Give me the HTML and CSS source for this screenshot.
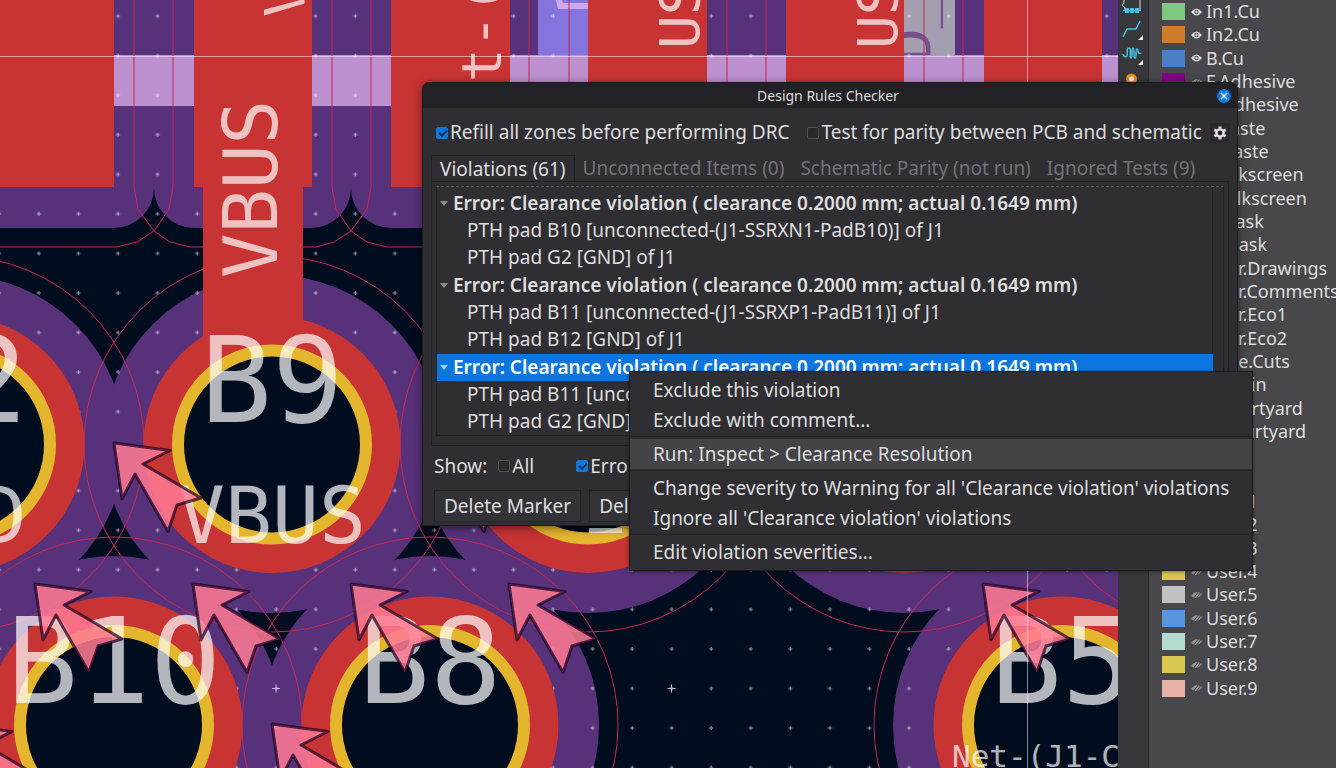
FILE: index.html
```
<!DOCTYPE html>
<html lang="en">
<head>
  <meta charset="UTF-8">
  <meta name="viewport" content="width=device-width, initial-scale=1.0">
  <title>PCB Editor</title>
  <link rel="stylesheet" href="styles.css">
</head>
<body>
  <main class="editor">
    <svg class="board" width="1118" height="768" viewBox="0 0 1118 768" role="img" aria-label="Board">
      <defs>
        <pattern id="dots" x="256.2" y="668.7" width="39.55" height="39.55" patternUnits="userSpaceOnUse">
          <path d="M18 19.8h4M20 17.8v4" stroke="#fff" stroke-opacity=".6"/>
        </pattern>
        <g id="pad">
          <circle r="128.5" fill="#c83434"/>
          <circle r="94" fill="#000d1e" stroke="#e3b62e" stroke-width="12"/>
        </g>
        <path id="arrow" d="M0 0L56 7.500 29 21 87 55 63 62 54 88.500 21 31 8 56Z"/>
      </defs>

      <!-- zone clearance -->
      <g fill="#57327a">
        <rect x="-60" y="-60" width="214" height="288" rx="40"/>
        <rect x="154" y="-60" width="197" height="288" rx="40"/>
        <rect x="351" y="-60" width="198" height="288" rx="40"/>
        <rect x="549" y="-60" width="600" height="288" rx="40"/>
        <path d="M110 0h90v187h-90zM308 0h90v187h-90z"/>
        <circle cx="-44" cy="444" r="169"/>
        <circle cx="272" cy="444" r="169"/>
        <circle cx="588" cy="444" r="169"/>
        <circle cx="904" cy="444" r="169"/>
        <circle cx="1220" cy="444" r="169"/>
        <circle cx="-202" cy="725" r="169"/>
        <circle cx="114" cy="725" r="169"/>
        <circle cx="430" cy="725" r="169"/>
        <circle cx="1062" cy="725" r="169"/>
      </g>
      <rect x="538" y="0" width="50" height="55" fill="#8574dc"/>
      <path d="M556 0h6l1 3h25v6h-30z" fill="#cda6f0"/>
      <rect x="904" y="0" width="51" height="55" fill="#a39eb0"/>
      <text class="ref-name" transform="translate(930 62) rotate(-90)">D_</text>
      <g fill="#bd90cf">
        <path d="M114 55h80v51h-80zM312 55h79v51h-79zM510 55h78v51h-78zM707 55h79v51h-79zM904 55h80v51h-80zM1102 55h16v51h-16z"/>
      </g>
      <rect width="1118" height="768" fill="url(#dots)"/>
      <path d="M272 688.500h8M276 684.500v8M667.500 688.500h8M671.500 684.500v8" stroke="#d0b0dc"/>

      <!-- clearance outlines -->
      <g class="outline">
        <path d="M134 0v187l4 22 16 22 16 11 20 5h126l18-5 17-11 16-22 4-22V0"/>
        <path d="M173 0v187l-4 22-15 22-17 11-21 5H0"/>
        <path d="M332 0v187l4 22 15 22 16 11 20 5h40M529 0v90M569 0v90M727 0v90M766 0v90M924 0v90M963 0v90"/>
        <circle cx="-44" cy="444" r="188"/>
        <circle cx="272" cy="444" r="188"/>
        <circle cx="588" cy="444" r="188"/>
        <circle cx="904" cy="444" r="188"/>
        <circle cx="1220" cy="444" r="188"/>
        <circle cx="-202" cy="725" r="188"/>
        <circle cx="114" cy="725" r="188"/>
        <circle cx="430" cy="725" r="188"/>
        <circle cx="1062" cy="725" r="188"/>
      </g>

      <!-- copper -->
      <g fill="#c83434">
        <path d="M0 0h114v187H0zM194 0h118v187h-9v150H203V187h-9zM391 0h119v187H391zM588 0h119v187H588zM786 0h118v187H786zM984 0h118v187H984z"/>
      </g>
      <use href="#pad" x="-44" y="444.500"/>
      <use href="#pad" x="272" y="444.500"/>
      <use href="#pad" x="588" y="444.500"/>
      <use href="#pad" x="904" y="444.500"/>
      <use href="#pad" x="114" y="725"/>
      <use href="#pad" x="430" y="725"/>
      <use href="#pad" x="1062" y="725"/>

      <g class="pad-name">
        <text x="-44" y="422">G2</text>
        <text x="272" y="422">B9</text>
        <text x="114" y="703">B10</text>
        <text x="430" y="703">B8</text>
        <text x="1062" y="703">B5</text>
      </g>
      <g class="net-name">
        <text x="-44" y="543">GND</text>
        <text x="272" y="543">VBUS</text>
        <text class="track-name" transform="translate(277 189) rotate(-90)">VBUS</text>
      </g>
      <g class="net-name-small">
        <text transform="translate(304 17) rotate(-90)">VBUS</text>
        <text transform="translate(501 82) rotate(-90)">t-(J1</text>
        <text transform="translate(699 49) rotate(-90)">USB</text>
        <text transform="translate(897 49) rotate(-90)">USB</text>
      </g>
      <text class="net-name-tiny" x="952" y="767">Net-(J1-C</text>
      <path d="M589 528h33v5h-33z" fill="#fff" fill-opacity=".7"/>

      <g class="marker">
        <use href="#arrow" x="114" y="443"/>
        <use href="#arrow" x="430" y="443"/>
        <use href="#arrow" x="35" y="584"/>
        <use href="#arrow" x="193" y="584"/>
        <use href="#arrow" x="351" y="584"/>
        <use href="#arrow" x="509" y="584"/>
        <use href="#arrow" x="983" y="584"/>
        <use href="#arrow" x="272" y="724"/>
        <use href="#arrow" x="-44" y="724"/>
      </g>
      <path d="M0 56.500h1118M1027.500 0v768" stroke="#fff" stroke-opacity=".5"/>
    </svg>

    <div class="toolbar">
      <svg width="31" height="90" viewBox="0 0 31 90" fill="none" aria-hidden="true">
        <path d="M6 0v3l-2 2 3 3v2M22 0v10" stroke="#ddd"/>
        <path d="M5 10.500h18" stroke="#45c4e0"/>
        <path d="M7 8h4v5H7zM12 8h4v5h-4zM17 8h4v5h-4z" fill="#45c4e0"/>
        <path d="M5 37l4-8h9l4-8" stroke="#45c4e0" stroke-width="1.500"/>
        <path d="M25 35v5h-5zM25 60v5h-5z" fill="#eee"/>
        <path d="M5 54c0 2 3 4 4 2s-1-8 2-8 0 10 2 10 0-10 2-10 0 10 2 10 0-9 2-9 0 6 4 4" stroke="#45c4e0" stroke-width="1.500"/>
        <circle cx="13.500" cy="79" r="4" fill="#fff3d5" stroke="#ea8c1c" stroke-width="3"/>
      </svg>
    </div>

    <aside class="layers">
      <ul class="layer-list" id="layerList"></ul>
    </aside>
  </main>

  <section class="dialog" role="dialog" aria-labelledby="dialogTitle">
    <header class="titlebar">
      <h1 id="dialogTitle">Design Rules Checker</h1>
      <button class="close" aria-label="Close">
        <svg width="14" height="14" viewBox="0 0 14 14"><path d="M4 4l6 6M10 4l-6 6" stroke="#fff" stroke-width="1.500"/></svg>
      </button>
    </header>
    <div class="options">
      <label><input type="checkbox" checked>Refill all zones before performing DRC</label>
      <label><input type="checkbox">Test for parity between PCB and schematic</label>
      <button class="settings" aria-label="Settings">
        <svg width="14" height="14" viewBox="0 0 14 14" fill="none" stroke="#e8dde8"><circle cx="7" cy="7" r="3.600" stroke-width="2.400"/><path d="M7 .5v2M7 11.500v2M1.400 3.700l1.700 1M10.900 9.300l1.700 1M1.400 10.300l1.700-1M10.900 4.700l1.700-1" stroke-width="3"/></svg>
      </button>
    </div>
    <nav class="tabs">
      <button class="tab active">Violations (61)</button>
      <button class="tab">Unconnected Items (0)</button>
      <button class="tab">Schematic Parity (not run)</button>
      <button class="tab">Ignored Tests (9)</button>
    </nav>
    <div class="notebook">
      <div class="tree">
        <ul class="group clipped"><li>PTH pad G2 [GND] of J1</li></ul>
        <ul class="group">
          <li class="error">Error: Clearance violation ( clearance 0.2000 mm; actual 0.1649 mm)</li>
          <li>PTH pad B10 [unconnected-(J1-SSRXN1-PadB10)] of J1</li>
          <li>PTH pad G2 [GND] of J1</li>
        </ul>
        <ul class="group">
          <li class="error">Error: Clearance violation ( clearance 0.2000 mm; actual 0.1649 mm)</li>
          <li>PTH pad B11 [unconnected-(J1-SSRXP1-PadB11)] of J1</li>
          <li>PTH pad B12 [GND] of J1</li>
        </ul>
        <ul class="group">
          <li class="error selected">Error: Clearance violation ( clearance 0.2000 mm; actual 0.1649 mm)</li>
          <li>PTH pad B11 [unconnected-(J1-SSRXP1-PadB11)] of J1</li>
          <li>PTH pad G2 [GND] of J1</li>
        </ul>
      </div>
    </div>
    <div class="show">
      <span>Show:</span>
      <label class="show-all"><input type="checkbox">All</label>
      <label><input type="checkbox" checked>Errors</label>
    </div>
    <footer class="actions">
      <button>Delete Marker</button>
      <button>Delete All Markers</button>
    </footer>
  </section>

  <div class="menu" role="menu">
    <button role="menuitem">Exclude this violation</button>
    <button role="menuitem">Exclude with comment...</button>
    <hr>
    <button role="menuitem" class="hover">Run: Inspect &gt; Clearance Resolution</button>
    <hr>
    <button role="menuitem">Change severity to Warning for all 'Clearance violation' violations</button>
    <button role="menuitem">Ignore all 'Clearance violation' violations</button>
    <hr>
    <button role="menuitem">Edit violation severities...</button>
  </div>

  <script src="layers.js"></script>
</body>
</html>
```
FILE: styles.css
```
* {
  box-sizing: border-box;
}
body {
  margin: 0;
  overflow: hidden;
  background: #000d1e;
  color: #dedede;
  font: 19px/27px "Noto Sans", "Open Sans", sans-serif;
}
button {
  font: inherit;
  color: inherit;
  background: none;
  border: 0;
  padding: 0;
}
ul {
  list-style: none;
  margin: 0;
  padding: 0;
}

/* Board */
.editor {
  display: flex;
  height: 100vh;
}
.board {
  flex: 1;
  min-width: 0;
  height: 768px;
  background: #000d1e;
}
.outline {
  fill: none;
  stroke: #c92650;
}
.pad-name, .net-name, .net-name-small, .net-name-tiny {
  font-family: "DejaVu Sans Mono", monospace;
  fill: #fff;
  fill-opacity: .7;
  text-anchor: middle;
}
.pad-name {
  font-size: 119px;
}
.net-name {
  font-size: 78px;
}
.net-name .track-name {
  font-size: 74px;
}
.net-name-small {
  font-size: 56px;
  text-anchor: start;
}
.net-name-tiny {
  font-size: 31px;
  text-anchor: start;
}
.ref-name {
  font: 56px "DejaVu Sans Mono", monospace;
  fill: #75508c;
}
.marker {
  fill: #ff7a94;
  fill-opacity: .86;
  stroke: #1a0020;
  stroke-opacity: .7;
  stroke-width: 3px;
  stroke-linejoin: round;
}

/* Right side */
.toolbar {
  width: 31px;
  background: #38373b;
  border-right: 1px solid #2b2a2e;
}
.layers {
  width: 187px;
  background: #48474b;
  overflow: hidden;
}
.layer-list {
  display: grid;
  grid-auto-rows: 1fr;
  height: 700px;
}
.layer-list li {
  display: flex;
  align-items: center;
  gap: 6px;
  padding-left: 13px;
  font-size: 18px;
  line-height: 23px;
  white-space: nowrap;
}
.swatch {
  flex: none;
  width: 23px;
  height: 17px;
}
.eye {
  flex: none;
  margin-right: -2px;
}

/* Dialog */
.dialog {
  position: absolute;
  left: 422px;
  top: 82px;
  width: 816px;
  height: 444px;
  background: #2f2e33;
  border: 1px solid #1b1b1e;
  border-radius: 7px 7px 0 0;
  box-shadow: 0 2px 10px rgba(0, 0, 0, .5);
}
.titlebar {
  display: flex;
  align-items: center;
  height: 25px;
  padding-right: 6px;
  background: #222226;
  border-radius: 6px 6px 0 0;
}
.titlebar h1 {
  flex: 1;
  margin: 0;
  padding-left: 16px;
  font-size: 14px;
  font-weight: 400;
  text-align: center;
}
.close {
  width: 14px;
  height: 14px;
  border-radius: 50%;
  background: #0f78dc;
}
.close svg {
  display: block;
}
.options, .show {
  display: flex;
  align-items: center;
  white-space: nowrap;
}
.options {
  height: 47px;
  padding: 2px 7px 0 13px;
}
.options label + label {
  margin-left: 18px;
}
label {
  display: flex;
  align-items: center;
}
input {
  appearance: none;
  width: 12px;
  height: 12px;
  margin: 0 2px 0 0;
  border: 1px solid #515055;
  border-radius: 2px;
  background: #2a2a2a;
}
input:checked {
  border-color: #0f78dc;
  background: #0f78dc;
}
input:checked::after {
  content: "";
  display: block;
  width: 6px;
  height: 3px;
  margin: 2px 0 0 2px;
  border: solid #172c4c;
  border-width: 0 0 2px 2px;
  transform: rotate(-45deg);
}
.settings {
  display: grid;
  place-items: center;
  width: 20px;
  height: 20px;
  margin-left: auto;
  background: #29282c;
}
.tabs {
  display: flex;
  padding: 0 8px;
  white-space: nowrap;
}
.tab {
  height: 26px;
  padding: 0 8px;
  color: #747377;
}
.tab.active {
  color: #dedede;
  border: 1px solid #242327;
  border-bottom: 0;
}
.notebook {
  height: 265px;
  margin: 0 8px;
  padding: 4px;
  border: 1px solid #242327;
}
.tree {
  height: 250px;
  border: 1px solid #242327;
  border-top: 1px dashed #55545a;
  overflow: hidden;
  padding-right: 10px;
  background: linear-gradient(#242327, #242327) right 10px top / 1px 100% no-repeat;
}
.group {
  margin-bottom: 1px;
}
.group.clipped {
  margin-top: -25px;
}
.group li {
  height: 27px;
  padding-left: 30px;
  white-space: nowrap;
}
.group .error {
  display: flex;
  align-items: center;
  gap: 5px;
  padding-left: 3px;
  font-weight: 600;
}
.error::before {
  content: "";
  border: 4px solid transparent;
  border-top: 5px solid #8c8c90;
  border-bottom: 0;
}
.group .selected {
  background: #0c76de;
  color: #fff;
}
.selected::before {
  border-top-color: #9cd0ff;
}
.show {
  height: 44px;
  padding: 0 0 4px 11px;
}
.show-all {
  margin: 0 42px 0 11px;
}
.actions {
  display: flex;
  gap: 8px;
  padding-left: 11px;
}
.actions button {
  height: 32px;
  padding: 0 9px;
  border: 1px solid #242327;
  background: #333236;
}

/* Context menu */
.menu {
  position: absolute;
  left: 629px;
  top: 371px;
  width: 624px;
  padding: 3px 0;
  background: #2f2e33;
  border: 1px solid #1b1b1e;
  box-shadow: 0 1px 4px rgba(0, 0, 0, .4);
}
.menu button {
  display: block;
  width: 100%;
  height: 30px;
  padding-left: 23px;
  text-align: left;
  white-space: nowrap;
}
.menu .hover {
  background: #444347;
}
.menu hr {
  height: 1px;
  margin: 1px 0 2px;
  border: 0;
  background: #232226;
}
```
FILE: layers.js
```
const layers = [
  ["In1.Cu", "#7fc87f", true],
  ["In2.Cu", "#ce7d2c", true],
  ["B.Cu", "#4d7fc4", true],
  ["F.Adhesive", "#840084"],
  ["B.Adhesive", "#0000a0"],
  ["F.Paste", "#b4a09a"],
  ["B.Paste", "#00c2c2"],
  ["F.Silkscreen", "#f2eda1"],
  ["B.Silkscreen", "#e8b2a7"],
  ["F.Mask", "#d864ff"],
  ["B.Mask", "#02ffee"],
  ["User.Drawings", "#c2c2c2"],
  ["User.Comments", "#5994dc"],
  ["User.Eco1", "#b4dbd2"],
  ["User.Eco2", "#d8c852"],
  ["Edge.Cuts", "#d0d2cd"],
  ["Margin", "#ff26e2"],
  ["F.Courtyard", "#ff26e2"],
  ["B.Courtyard", "#26e9ff"],
  ["F.Fab", "#afafaf"],
  ["B.Fab", "#585d84"],
  ["User.1", "#c2c2c2"],
  ["User.2", "#5994dc"],
  ["User.3", "#b4dbd2"],
  ["User.4", "#d8c852"],
  ["User.5", "#c2c2c2"],
  ["User.6", "#5994dc"],
  ["User.7", "#b4dbd2"],
  ["User.8", "#d8c852"],
  ["User.9", "#e8b2a7"]
];

const eyeOpen = '<svg class="eye" width="11" height="8" viewBox="0 0 11 8"><path d="M0 4Q5.500-3 11 4 5.500 11 0 4Z" fill="#ddd"/><circle cx="5.500" cy="4" r="2.200" fill="#48474b"/><circle cx="5.500" cy="4" r="1.200" fill="#ddd"/></svg>';
const eyeHidden = '<svg class="eye" width="11" height="8" viewBox="0 0 11 8"><path d="M0 5Q5-2 11 3 6 10 0 5Z" fill="#8f8e92"/><path d="M2 8l6-8M5 8l5-7" stroke="#48474b"/></svg>';

const list = document.getElementById("layerList");
for (const [name, color, visible] of layers) {
  const row = document.createElement("li");
  row.innerHTML = `<span class="swatch" style="background:${color}"></span>${visible ? eyeOpen : eyeHidden}<span>${name}</span>`;
  list.appendChild(row);
}
```
